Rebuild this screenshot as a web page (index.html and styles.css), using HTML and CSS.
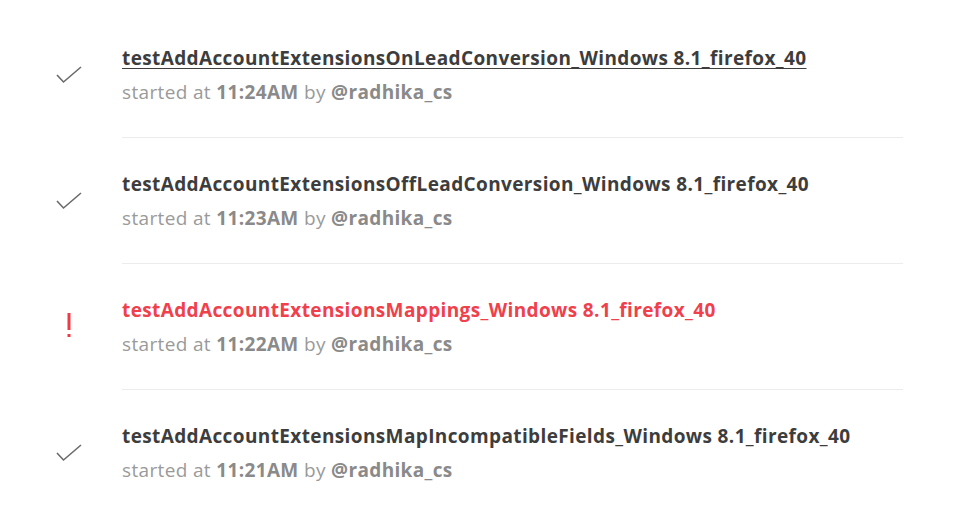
FILE: index.html
```
<!DOCTYPE html>
<html>
<head>
<meta charset="utf-8">
<link rel="stylesheet" href="styles.css">
</head>
<body>
<ul class="runs">
  <li class="run">
    <div class="status"><svg class="check" width="28" height="20" viewBox="0 0 28 20"><path d="M2 9 L8.5 16 L26 1" fill="none" stroke="#6b6b6b" stroke-width="1.6"/></svg></div>
    <div class="info">
      <a class="title hover" href="#">testAddAccountExtensionsOnLeadConversion_Windows 8.1_firefox_40</a>
      <div class="meta">started at <b>11:24AM</b> by <b>@radhika_cs</b></div>
    </div>
  </li>
  <li class="run">
    <div class="status"><svg class="check" width="28" height="20" viewBox="0 0 28 20"><path d="M2 9 L8.5 16 L26 1" fill="none" stroke="#6b6b6b" stroke-width="1.6"/></svg></div>
    <div class="info">
      <a class="title" href="#">testAddAccountExtensionsOffLeadConversion_Windows 8.1_firefox_40</a>
      <div class="meta">started at <b>11:23AM</b> by <b>@radhika_cs</b></div>
    </div>
  </li>
  <li class="run">
    <div class="status"><svg class="bang" width="6" height="26" viewBox="0 0 6 26"><rect x="1.5" y="0" width="3" height="17" fill="#ee3b48"/><rect x="1.5" y="21" width="3" height="3" fill="#ee3b48"/></svg></div>
    <div class="info">
      <a class="title failed" href="#">testAddAccountExtensionsMappings_Windows 8.1_firefox_40</a>
      <div class="meta">started at <b>11:22AM</b> by <b>@radhika_cs</b></div>
    </div>
  </li>
  <li class="run">
    <div class="status"><svg class="check" width="28" height="20" viewBox="0 0 28 20"><path d="M2 9 L8.5 16 L26 1" fill="none" stroke="#6b6b6b" stroke-width="1.6"/></svg></div>
    <div class="info last">
      <a class="title" href="#">testAddAccountExtensionsMapIncompatibleFields_Windows 8.1_firefox_40</a>
      <div class="meta">started at <b>11:21AM</b> by <b>@radhika_cs</b></div>
    </div>
  </li>
</ul>
</body>
</html>
```
FILE: styles.css
```
html, body {
  margin: 0;
  padding: 0;
  background: #fff;
}
body {
  font-family: "Open Sans", "Liberation Sans", sans-serif;
  width: 964px;
  height: 522px;
  overflow: hidden;
}
.runs {
  list-style: none;
  margin: 0;
  padding: 12px 0 0 0;
}
.run {
  display: flex;
  align-items: stretch;
}
.status {
  width: 122px;
  flex: none;
  display: flex;
  align-items: center;
  padding-left: 55px;
  box-sizing: border-box;
}
.check {
  display: block;
  margin-top: 2px;
}
.bang {
  display: block;
  margin-left: 11px;
  margin-top: -2px;
}
.info {
  width: 781px;
  padding: 31px 0 30px 0;
  border-bottom: 1px solid #ececec;
}
.info.last {
  border-bottom: none;
}
.title {
  display: block;
  font-size: 19px;
  font-weight: 700;
  line-height: 30px;
  color: #3d3d3d;
  text-decoration: none;
  letter-spacing: 0.38px;
}
.title.hover {
  text-decoration: underline;
  text-decoration-thickness: 1px;
  text-underline-offset: 3px;
}
.title.failed {
  color: #f0404c;
}
.meta {
  font-size: 19px;
  line-height: 30px;
  margin-top: 4px;
  color: #9a9a9a;
  letter-spacing: 0.35px;
}
.meta b {
  font-weight: 700;
  color: #8a8a8a;
}
```
